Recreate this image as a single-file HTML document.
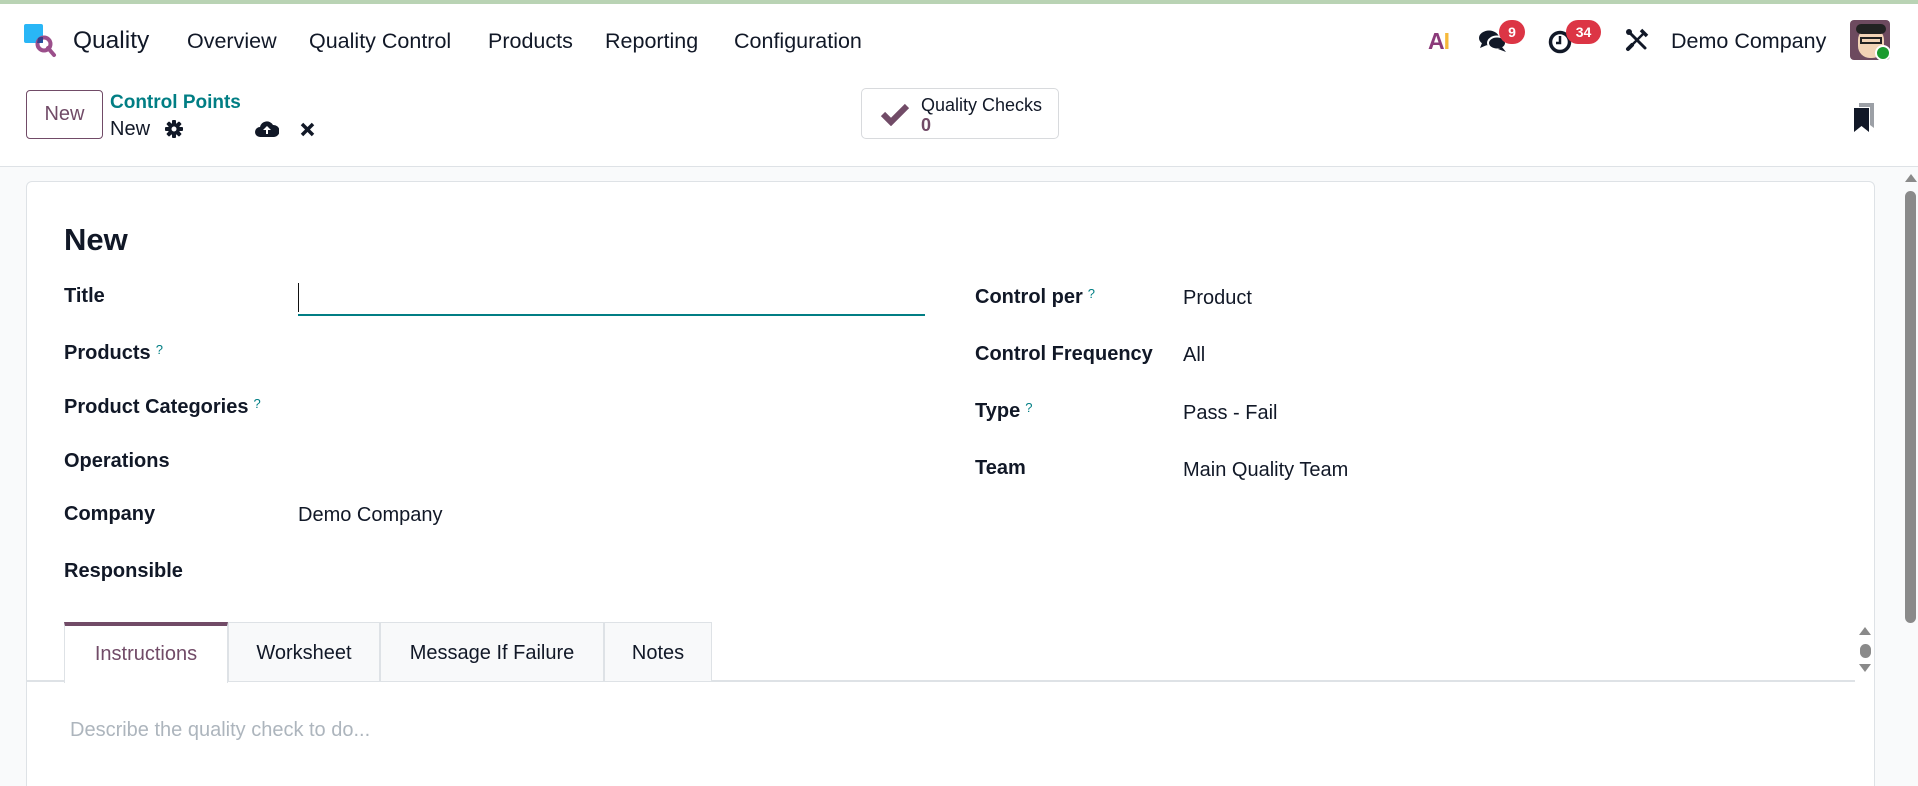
<!DOCTYPE html>
<html><head><meta charset="utf-8"><style>
*{box-sizing:border-box;margin:0;padding:0}
html,body{width:1918px;height:786px;overflow:hidden}
body{background:#fff;font-family:"Liberation Sans",sans-serif;color:#111827;position:relative}
.a{position:absolute;white-space:nowrap}
.nav{font-size:21.5px;top:29px}
.lbl{font-size:20px;font-weight:bold;color:#111827}
.val{font-size:20px}
.q{color:#017e84;font-size:13px;vertical-align:top;font-weight:normal;margin-left:5px}
.badge{background:#dc3545;color:#fff;font-size:14px;font-weight:bold;border-radius:12px;height:24px;line-height:24px;text-align:center}
.tab{position:absolute;top:622px;height:59px;border:1px solid #dee2e6;border-bottom:none;background:#f8f9fa;font-size:20px;text-align:center;line-height:60px;color:#111827}
</style></head><body>
<div class="a" style="left:0;top:0;width:1918px;height:4px;background:#b9d3b4"></div>
<div class="a" style="left:24px;top:24px;width:19px;height:19px;background:#29b6f6;border-radius:2px"></div>
<svg class="a" style="left:34px;top:34px" width="26" height="26" viewBox="0 0 26 26"><circle cx="10" cy="10" r="6.5" fill="none" stroke="#9b4f8b" stroke-width="4"/><path d="M4 4 A8 8 0 0 1 9 3 L9 9 L3 9Z" fill="#1f3b8a" opacity=".8"/><path d="M14 14 L20 21" stroke="#9b4f8b" stroke-width="4" stroke-linecap="round"/></svg>
<div class="a" style="left:73px;top:27px;font-size:24.5px">Quality</div>
<div class="a nav" style="left:187px">Overview</div>
<div class="a nav" style="left:309px">Quality Control</div>
<div class="a nav" style="left:488px">Products</div>
<div class="a nav" style="left:605px">Reporting</div>
<div class="a nav" style="left:734px">Configuration</div>
<div class="a" style="left:1428px;top:28px;font-size:23px;font-weight:bold;letter-spacing:-1px"><span style="color:#8b3a7a">A</span><span style="color:#f6b93b">I</span></div>
<svg class="a" style="left:1478px;top:28px" width="30" height="26" viewBox="0 0 30 26"><ellipse cx="11" cy="10" rx="10" ry="7.5" fill="#111827"/><path d="M4 15 L2 20 L9 17Z" fill="#111827"/><ellipse cx="19" cy="15" rx="9" ry="6.5" fill="#111827" stroke="#fff" stroke-width="2"/><path d="M24 19 L28 24 L20 21Z" fill="#111827"/></svg>
<div class="a badge" style="left:1499px;top:20px;width:26px">9</div>
<svg class="a" style="left:1548px;top:29px" width="26" height="26" viewBox="0 0 26 26"><circle cx="12" cy="13" r="9.5" fill="none" stroke="#111827" stroke-width="3.5"/><path d="M12 7 V14 H8" fill="none" stroke="#111827" stroke-width="2.5"/></svg>
<div class="a badge" style="left:1566px;top:20px;width:35px">34</div>
<svg class="a" style="left:1625px;top:28px" width="24" height="24" viewBox="0 0 24 24"><path d="M4 4 L20 20" stroke="#111827" stroke-width="3" stroke-linecap="round"/><path d="M20 4 L6 18" stroke="#111827" stroke-width="2.5"/><path d="M16 2 L22 8" stroke="#111827" stroke-width="3.5"/><path d="M3 21 L7 17" stroke="#111827" stroke-width="4" stroke-linecap="round"/><circle cx="4" cy="4" r="3" fill="#111827"/></svg>
<div class="a" style="left:1671px;top:29px;font-size:21.5px">Demo Company</div>
<div class="a" style="left:1850px;top:20px;width:40px;height:40px;border-radius:4px;background:#6d4a5f;overflow:hidden"><div style="position:absolute;left:8px;top:8px;width:26px;height:30px;border-radius:12px;background:#f2d3b6"></div><div style="position:absolute;left:6px;top:4px;width:30px;height:10px;border-radius:6px;background:#222"></div><div style="position:absolute;left:10px;top:17px;width:22px;height:7px;border:2px solid #222"></div></div>
<div class="a" style="left:1875px;top:45px;width:16px;height:16px;border-radius:50%;background:#1a9b2f;border:2px solid #fff"></div>
<div class="a" style="left:26px;top:90px;width:77px;height:49px;border:1px solid #714b67;border-radius:4px;font-size:20px;color:#714b67;text-align:center;line-height:47px">New</div>
<div class="a" style="left:110px;top:92px;font-size:19px;font-weight:bold;color:#017e84">Control Points</div>
<div class="a" style="left:110px;top:118px;font-size:20px">New</div>
<svg class="a" style="left:165px;top:120px" width="18" height="18" viewBox="0 0 18 18"><g fill="#111827"><circle cx="9" cy="9" r="6"/><rect x="7" y="0" width="4" height="18" rx="1"/><rect x="0" y="7" width="18" height="4" rx="1"/><rect x="7" y="0" width="4" height="18" rx="1" transform="rotate(45 9 9)"/><rect x="7" y="0" width="4" height="18" rx="1" transform="rotate(-45 9 9)"/></g><circle cx="9" cy="9" r="2.5" fill="#fff"/></svg>
<svg class="a" style="left:255px;top:120px" width="24" height="18" viewBox="0 0 24 18"><path d="M5 17 A5 5 0 0 1 5 7 A7 7 0 0 1 18 5 A6 6 0 0 1 19 17Z" fill="#111827"/><path d="M12 6 L8 10 H11 V14 H13 V10 H16Z" fill="#fff"/></svg>
<svg class="a" style="left:300px;top:122px" width="15" height="15" viewBox="0 0 15 15"><path d="M2 2 L13 13 M13 2 L2 13" stroke="#111827" stroke-width="3.5"/></svg>
<div class="a" style="left:861px;top:88px;width:198px;height:51px;border:1px solid #d8dadd;border-radius:5px"></div>
<svg class="a" style="left:880px;top:102px" width="30" height="24" viewBox="0 0 30 24"><path d="M3 12 L11 20 L27 4" fill="none" stroke="#714b67" stroke-width="6"/></svg>
<div class="a" style="left:921px;top:95px;font-size:18px;line-height:20px">Quality Checks<br><span style="color:#714b67;font-weight:bold">0</span></div>
<svg class="a" style="left:1852px;top:102px" width="24" height="32" viewBox="0 0 24 32"><path d="M7 1 H22 V26 L18 23 V5 H7Z" fill="#9ca0a6"/><path d="M2 6 H17 V30 L9.5 24 L2 30Z" fill="#111827"/></svg>
<div class="a" style="left:0;top:166px;width:1918px;height:620px;background:#f9fafb;border-top:1px solid #dee2e6"></div>
<div class="a" style="left:26px;top:181px;width:1849px;height:640px;background:#fff;border:1px solid #dee2e6;border-radius:6px"></div>
<div class="a" style="left:1905px;top:174px;width:0;height:0;border-left:6px solid transparent;border-right:6px solid transparent;border-bottom:8px solid #8a8a8a"></div>
<div class="a" style="left:1905px;top:191px;width:11px;height:432px;border-radius:6px;background:#8a8a8a"></div>
<div class="a" style="left:64px;top:222px;font-size:31px;font-weight:600">New</div>
<div class="a lbl" style="left:64px;top:285px">Title</div>
<div class="a" style="left:298px;top:283px;width:1px;height:29px;background:#111"></div>
<div class="a" style="left:298px;top:314px;width:627px;height:2px;background:#017e84"></div>
<div class="a lbl" style="left:64px;top:342px">Products<span class="q">?</span></div>
<div class="a lbl" style="left:64px;top:396px">Product Categories<span class="q">?</span></div>
<div class="a lbl" style="left:64px;top:450px">Operations</div>
<div class="a lbl" style="left:64px;top:503px">Company</div>
<div class="a val" style="left:298px;top:504px">Demo Company</div>
<div class="a lbl" style="left:64px;top:560px">Responsible</div>
<div class="a lbl" style="left:975px;top:286px">Control per<span class="q">?</span></div>
<div class="a val" style="left:1183px;top:287px">Product</div>
<div class="a lbl" style="left:975px;top:343px">Control Frequency</div>
<div class="a val" style="left:1183px;top:344px">All</div>
<div class="a lbl" style="left:975px;top:400px">Type<span class="q">?</span></div>
<div class="a val" style="left:1183px;top:402px">Pass - Fail</div>
<div class="a lbl" style="left:975px;top:457px">Team</div>
<div class="a val" style="left:1183px;top:459px">Main Quality Team</div>
<div class="a" style="left:26px;top:680px;width:1829px;height:2px;background:#dee2e6"></div>
<div class="tab" style="left:64px;width:164px;height:61px;background:#fff;border-top:4px solid #714b67;color:#714b67;line-height:56px">Instructions</div>
<div class="tab" style="left:228px;width:152px">Worksheet</div>
<div class="tab" style="left:380px;width:224px">Message If Failure</div>
<div class="tab" style="left:604px;width:108px">Notes</div>
<div class="a" style="left:1859px;top:627px;width:0;height:0;border-left:6px solid transparent;border-right:6px solid transparent;border-bottom:8px solid #8a8a8a"></div>
<div class="a" style="left:1860px;top:644px;width:11px;height:14px;border-radius:6px;background:#8a8a8a"></div>
<div class="a" style="left:1859px;top:664px;width:0;height:0;border-left:6px solid transparent;border-right:6px solid transparent;border-top:8px solid #8a8a8a"></div>
<div class="a" style="left:70px;top:719px;font-size:20px;color:#adb5bd">Describe the quality check to do...</div>
</body></html>
